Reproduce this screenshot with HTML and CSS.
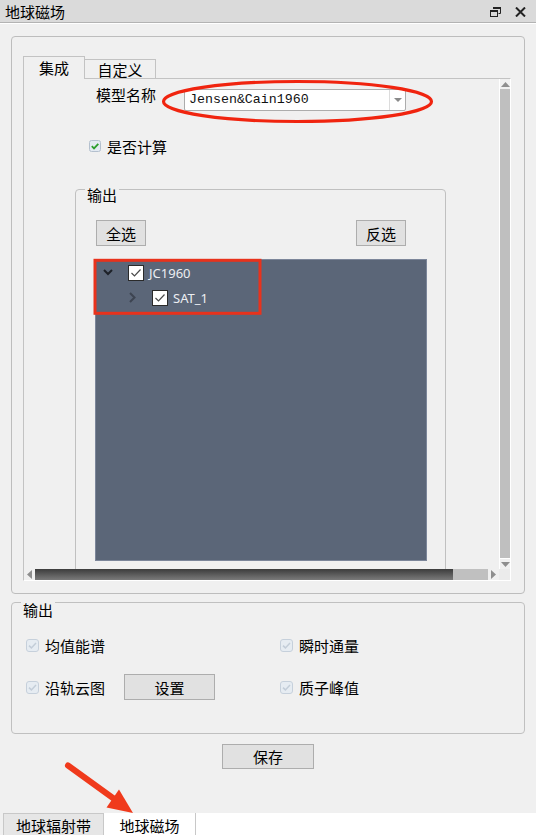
FILE: index.html
```html
<!DOCTYPE html>
<html lang="zh-CN">
<head>
<meta charset="utf-8">
<title>地球磁场</title>
<link rel="stylesheet" href="styles.css">
</head>
<body>
<div class="window">
  <header class="titlebar">
    <span class="title">地球磁场</span>
    <div class="title-buttons">
      <svg class="icon-restore" width="11" height="10" viewBox="0 0 11 10">
        <path d="M3.5 0.5h7v6h-2" fill="none" stroke="#222" stroke-width="1"/>
        <path d="M3 0h8v2h-8z" fill="#222"/>
        <rect x="0.5" y="3.5" width="7" height="6" fill="#dadada" stroke="#222" stroke-width="1"/>
        <path d="M0 3h8v2h-8z" fill="#222"/>
      </svg>
      <svg class="icon-close" width="11" height="10" viewBox="0 0 11 10">
        <path d="M1 0.5l9 9M10 0.5l-9 9" stroke="#222" stroke-width="2"/>
      </svg>
    </div>
  </header>

  <main class="dock-body">
    <section class="panel-box">
      <div class="tabs">
        <div class="tab active">集成</div>
        <div class="tab">自定义</div>
      </div>
      <div class="tab-pane">
        <div class="scroll-area">
          <div class="viewport">
            <div class="form-row">
              <span class="field-label">模型名称</span>
              <div class="combo">
                <span class="combo-text">Jensen&amp;Cain1960</span>
                <span class="combo-btn">
                  <svg width="8" height="4" viewBox="0 0 8 4"><path d="M0 0h8l-4 4z" fill="#8a8a8a"/></svg>
                </span>
              </div>
            </div>

            <label class="check-row">
              <span class="check-box check-green">
                <svg width="12" height="12" viewBox="0 0 12 12">
                  <rect x="0.5" y="0.5" width="11" height="11" rx="2" fill="#e3eaf2" stroke="#b4c0ce"/>
                  <path d="M2.8 6.2l2.2 2.2 4.3-4.6" fill="none" stroke="#2d9e2d" stroke-width="1.8"/>
                </svg>
              </span>
              <span>是否计算</span>
            </label>

            <div class="group inner-group">
              <div class="group-title">输出</div>
              <div class="btn-row">
                <button class="btn small">全选</button>
                <button class="btn small">反选</button>
              </div>
              <div class="tree">
                <div class="tree-row">
                  <span class="branch">
                    <svg width="10" height="7" viewBox="0 0 10 7"><path d="M1 1l4 4 4-4" fill="none" stroke="#1d2128" stroke-width="2"/></svg>
                  </span>
                  <span class="tree-check">
                    <svg width="16" height="16" viewBox="0 0 16 16">
                      <rect x="0.5" y="0.5" width="15" height="15" fill="#fff" stroke="#2a2a2a"/>
                      <path d="M3.5 8l3 3 6-6.5" fill="none" stroke="#4a4a4a" stroke-width="1.2"/>
                    </svg>
                  </span>
                  <span class="tree-text">JC1960</span>
                </div>
                <div class="tree-row level1">
                  <span class="branch">
                    <svg width="10" height="11" viewBox="0 0 10 11"><path d="M3 1l4.5 4.5-4.5 4.5" fill="none" stroke="#3d4451" stroke-width="2"/></svg>
                  </span>
                  <span class="tree-check">
                    <svg width="16" height="16" viewBox="0 0 16 16">
                      <rect x="0.5" y="0.5" width="15" height="15" fill="#fff" stroke="#2a2a2a"/>
                      <path d="M3.5 8l3 3 6-6.5" fill="none" stroke="#4a4a4a" stroke-width="1.2"/>
                    </svg>
                  </span>
                  <span class="tree-text">SAT_1</span>
                </div>
              </div>
            </div>
          </div>

          <div class="vscroll">
            <span class="arrow-btn">
              <svg width="9" height="5" viewBox="0 0 9 5"><path d="M0 5h9l-4.5-5z" fill="#8e8e8e"/></svg>
            </span>
            <span class="v-track"><span class="v-thumb"></span></span>
            <span class="arrow-btn">
              <svg width="9" height="5" viewBox="0 0 9 5"><path d="M0 0h9l-4.5 5z" fill="#8e8e8e"/></svg>
            </span>
          </div>
          <div class="hscroll">
            <span class="arrow-btn">
              <svg width="5" height="9" viewBox="0 0 5 9"><path d="M5 0v9l-5-4.5z" fill="#8e8e8e"/></svg>
            </span>
            <span class="h-track"><span class="h-thumb"></span></span>
            <span class="arrow-btn">
              <svg width="5" height="9" viewBox="0 0 5 9"><path d="M0 0v9l5-4.5z" fill="#8e8e8e"/></svg>
            </span>
          </div>
          <div class="corner"></div>
        </div>
      </div>
    </section>

    <section class="group output-group">
      <div class="group-title">输出</div>
      <div class="option-grid">
        <label class="opt">
          <span class="check-box disabled">
            <svg width="13" height="13" viewBox="0 0 13 13">
              <rect x="0.5" y="0.5" width="12" height="12" rx="2.5" fill="#e6ecf2" stroke="#c6d0db"/>
              <path d="M3 6.6l2.4 2.3 4.6-4.8" fill="none" stroke="#c3cdd8" stroke-width="1.5"/>
            </svg>
          </span>
          <span>均值能谱</span>
        </label>
        <label class="opt">
          <span class="check-box disabled">
            <svg width="13" height="13" viewBox="0 0 13 13">
              <rect x="0.5" y="0.5" width="12" height="12" rx="2.5" fill="#e6ecf2" stroke="#c6d0db"/>
              <path d="M3 6.6l2.4 2.3 4.6-4.8" fill="none" stroke="#c3cdd8" stroke-width="1.5"/>
            </svg>
          </span>
          <span>瞬时通量</span>
        </label>
        <div class="opt">
          <span class="check-box disabled">
            <svg width="13" height="13" viewBox="0 0 13 13">
              <rect x="0.5" y="0.5" width="12" height="12" rx="2.5" fill="#e6ecf2" stroke="#c6d0db"/>
              <path d="M3 6.6l2.4 2.3 4.6-4.8" fill="none" stroke="#c3cdd8" stroke-width="1.5"/>
            </svg>
          </span>
          <span>沿轨云图</span>
          <button class="btn wide">设置</button>
        </div>
        <label class="opt">
          <span class="check-box disabled">
            <svg width="13" height="13" viewBox="0 0 13 13">
              <rect x="0.5" y="0.5" width="12" height="12" rx="2.5" fill="#e6ecf2" stroke="#c6d0db"/>
              <path d="M3 6.6l2.4 2.3 4.6-4.8" fill="none" stroke="#c3cdd8" stroke-width="1.5"/>
            </svg>
          </span>
          <span>质子峰值</span>
        </label>
      </div>
    </section>

    <div class="save-row">
      <button class="btn save">保存</button>
    </div>
  </main>

  <nav class="bottom-tabs">
    <span class="btab">地球辐射带</span>
    <span class="btab current">地球磁场</span>
    <span class="btab-fill"></span>
  </nav>

  <svg class="annotations" width="536" height="835" viewBox="0 0 536 835">
    <ellipse cx="297.5" cy="101.5" rx="134" ry="20" fill="none" stroke="#f0240f" stroke-width="3.2"/>
    <rect x="95" y="260.3" width="165" height="53" fill="none" stroke="#e8321c" stroke-width="3"/>
    <line x1="68" y1="765.5" x2="115" y2="799.5" stroke="#f03a1c" stroke-width="6" stroke-linecap="round"/>
    <path d="M133 813l-26.5-5.5 12.5-18z" fill="#f03a1c"/>
  </svg>
</div>
</body>
</html>
```

FILE: styles.css
```css
* {
  box-sizing: border-box;
}

body {
  margin: 0;
  background: #f0f0f0;
  font-family: "Noto Sans CJK SC", "Noto Sans", sans-serif;
  font-size: 15px;
  color: #000;
}

.window {
  position: relative;
  width: 536px;
  height: 835px;
  display: flex;
  flex-direction: column;
  overflow: hidden;
}

/* ---------- title bar ---------- */
.titlebar {
  flex: none;
  height: 23px;
  background: #dadada;
  border-bottom: 1px solid #b3b3b3;
  box-shadow: 0 1px 0 #ffffff;
  display: flex;
  align-items: center;
  justify-content: space-between;
  padding: 0 10px 0 5px;
}

.title {
  line-height: 17px;
}

.title-buttons {
  display: flex;
  align-items: center;
  gap: 14px;
  padding-top: 1px;
}

.title-buttons svg {
  display: block;
}

/* ---------- body ---------- */
.dock-body {
  flex: none;
  padding: 13px 11px 0 11px;
  display: flex;
  flex-direction: column;
}

.panel-box {
  height: 558px;
  border: 1px solid #bdbdbd;
  border-radius: 4px;
  padding: 19px 13px 0 11px;
}

.tabs {
  display: flex;
  align-items: flex-end;
  height: 22px;
}

.tab {
  height: 19px;
  width: 71px;
  border: 1px solid #c3c3c3;
  border-bottom: none;
  border-left: none;
  background: #f0f0f0;
  display: flex;
  align-items: center;
  justify-content: center;
  line-height: 17px;
}

.tab.active {
  position: relative;
  z-index: 1;
  width: 62px;
  height: 23px;
  margin-bottom: -1px;
  border-left: 1px solid #c3c3c3;
  padding-bottom: 2px;
}

.tab-pane {
  height: 503px;
  border-top: 1px solid #c3c3c3;
  border-left: 1px solid #c3c3c3;
  border-right: 1px solid #ffffff;
  border-bottom: 1px solid #ffffff;
}

.scroll-area {
  height: 100%;
  display: grid;
  grid-template-columns: 1fr 11px;
  grid-template-rows: 1fr 11px;
}

.viewport {
  overflow: hidden;
  min-height: 0;
}

.form-row {
  display: flex;
  align-items: flex-start;
  margin: 10px 0 0 72px;
}

.field-label {
  width: 88px;
  line-height: 17px;
  margin-top: -3px;
}

.combo {
  width: 222px;
  height: 22px;
  background: #fff;
  border: 1px solid #acacac;
  border-radius: 2px;
  display: flex;
  align-items: center;
}

.combo-text {
  flex: 1;
  padding-left: 4px;
  font-family: "Liberation Mono", "DejaVu Sans Mono", monospace;
  font-size: 13.3px;
  line-height: 16px;
  color: #111;
}

.combo-btn {
  width: 16px;
  height: 100%;
  border-left: 1px solid #dcdcdc;
  display: flex;
  align-items: center;
  justify-content: center;
}

.combo-btn svg {
  display: block;
}

.check-row {
  display: flex;
  align-items: center;
  gap: 6px;
  height: 20px;
  margin: 25px 0 0 65px;
  line-height: 17px;
  width: max-content;
}

.check-box svg {
  display: block;
}

/* ---------- group boxes ---------- */
.group {
  border: 1px solid #c0c0c0;
  border-radius: 4px;
}

.group-title {
  width: max-content;
  background: #f0f0f0;
  padding: 0 2px;
  margin: -4px 0 0 9px;
  line-height: 17px;
}

.inner-group {
  width: 371px;
  height: 420px;
  margin: 33px 0 0 51px;
}

.btn-row {
  display: flex;
  justify-content: space-between;
  margin-top: 17px;
  padding: 0 39px 0 20px;
}

.btn {
  font: inherit;
  color: #000;
  background: #e1e1e1;
  border: 1px solid #adadad;
  border-radius: 0;
  padding: 0;
  line-height: 17px;
}

.btn.small {
  width: 50px;
  height: 26px;
}

.tree {
  width: 332px;
  height: 302px;
  margin: 13px 0 0 19px;
  background: #5b6678;
  border: 1px solid #7c869a;
  padding-top: 0;
}

.tree-row {
  display: flex;
  align-items: center;
  height: 25px;
}

.tree-row.level1 {
  padding-left: 24px;
}

.branch {
  width: 32px;
  padding-left: 7px;
  display: flex;
  align-items: center;
}

.branch svg,
.tree-check svg {
  display: block;
}

.tree-text {
  margin-left: 5px;
  font-family: "Noto Sans", "Open Sans", sans-serif;
  font-size: 13px;
  color: #eceef2;
  line-height: 16px;
}

/* ---------- scroll bars ---------- */
.vscroll {
  display: flex;
  flex-direction: column;
  background: #f0f0f0;
  border-left: 1px solid #ffffff;
}

.vscroll .arrow-btn {
  height: 10px;
  display: flex;
  align-items: center;
  justify-content: center;
}

.v-track {
  flex: 1;
  background: #c0c0c0;
  border-bottom: 1px solid #ffffff;
  display: flex;
  flex-direction: column;
}

.v-thumb {
  height: 100%;
  background: #bfbfbf;
}

.hscroll {
  display: flex;
  background: #f0f0f0;
}

.hscroll .arrow-btn {
  width: 11px;
  display: flex;
  align-items: center;
  justify-content: center;
}

.h-track {
  flex: 1;
  background: #c0c0c0;
  display: flex;
}

.h-thumb {
  width: 418px;
  background: linear-gradient(#3c3c3c, #7a7a7a);
}

.corner {
  background: #ebebeb;
}

/* ---------- bottom options ---------- */
.output-group {
  height: 132px;
  margin-top: 8px;
}

.output-group .group-title {
  margin-top: -2px;
}

.option-grid {
  display: grid;
  grid-template-columns: 254px 1fr;
  grid-template-rows: 26px 26px;
  row-gap: 16px;
  margin-top: 14px;
  padding-left: 14px;
}

.opt {
  display: flex;
  align-items: center;
  gap: 6px;
  line-height: 17px;
}

.btn.wide {
  width: 91px;
  height: 26px;
  margin-left: 13px;
}

.save-row {
  display: flex;
  justify-content: center;
  margin-top: 10px;
}

.btn.save {
  width: 92px;
  height: 25px;
}

/* ---------- bottom tab strip ---------- */
.bottom-tabs {
  margin-top: auto;
  flex: none;
  height: 22px;
  display: flex;
  padding-left: 3px;
}

.btab {
  display: flex;
  align-items: center;
  justify-content: center;
  width: 101px;
  background: #e6e6e6;
  border: 1px solid #c8c8c8;
  border-bottom: none;
  line-height: 17px;
  padding-top: 1px;
}

.btab.current {
  width: 92px;
  background: #ffffff;
  border: none;
  border-right: 1px solid #c8c8c8;
  padding-top: 3px;
}

.btab-fill {
  flex: 1;
  background: #ffffff;
}

/* ---------- annotation layer ---------- */
.annotations {
  position: absolute;
  left: 0;
  top: 0;
  pointer-events: none;
}
```
